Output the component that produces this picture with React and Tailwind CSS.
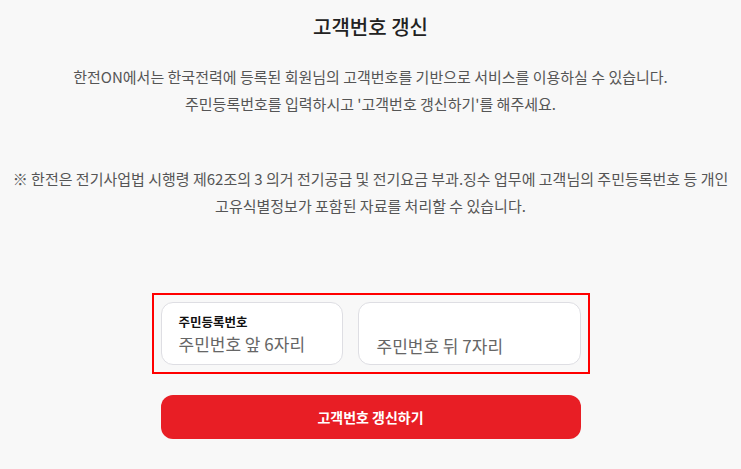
const App = () => {
  return (
    <div className="w-[741px] h-[469px] bg-[#f8f8f8] flex flex-col items-center font-['Noto_Sans_CJK_KR',sans-serif] overflow-hidden">
      <h1 className="mt-[11px] text-[20px] leading-[32px] font-medium text-[#222]">고객번호 갱신</h1>
      <div className="mt-[20px] text-[15px] leading-[27px] text-[#555] text-center">
        <p>한전ON에서는 한국전력에 등록된 회원님의 고객번호를 기반으로 서비스를 이용하실 수 있습니다.</p>
        <p>주민등록번호를 입력하시고 '고객번호 갱신하기'를 해주세요.</p>
      </div>
      <div className="mt-[48px] text-[15px] leading-[27px] text-[#555] text-center whitespace-nowrap">
        <p>※ 한전은 전기사업법 시행령 제62조의 3 의거 전기공급 및 전기요금 부과.징수 업무에 고객님의 주민등록번호 등 개인</p>
        <p>고유식별정보가 포함된 자료를 처리할 수 있습니다.</p>
      </div>
      <div className="mt-[74px] w-[438px] border-2 border-[#ff0000] p-[7px] flex gap-[15px]">
        <div className="w-[182px] h-[63px] bg-white border border-[#dedee3] rounded-[12px] pl-[17px] pt-[10px]">
          <div className="text-[12.5px] leading-[18px] font-bold text-[#111]">주민등록번호</div>
          <div className="text-[17px] leading-[25px] text-[#666]">주민번호 앞 6자리</div>
        </div>
        <div className="flex-1 h-[63px] bg-white border border-[#dedee3] rounded-[12px] pl-[18px] pt-[30px]">
          <div className="text-[17px] leading-[25px] text-[#666]">주민번호 뒤 7자리</div>
        </div>
      </div>
      <button className="mt-[21px] w-[420px] h-[44px] bg-[#e81e25] rounded-[12px] text-white text-[14px] font-bold">고객번호 갱신하기</button>
    </div>
  )
}

export default App
